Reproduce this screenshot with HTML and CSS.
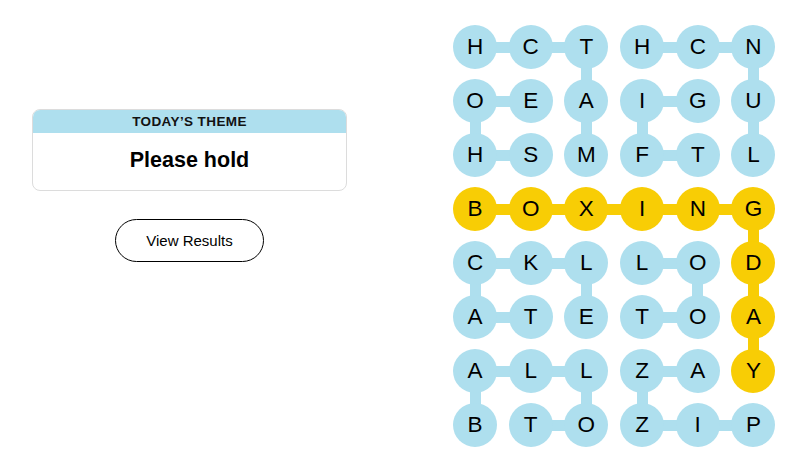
FILE: index.html
```html
<!DOCTYPE html>
<html>
<head>
<meta charset="utf-8">
<link rel="stylesheet" href="styles.css">
</head>
<body>
<main class="page">
  <section class="side">
    <div class="theme">
      <div class="theme-head">TODAY’S THEME</div>
      <div class="theme-body">Please hold</div>
    </div>
    <button class="results">View Results</button>
  </section>
  <section class="board">
    <div class="cell"><span class="dot">H</span><i class="r"></i></div>
    <div class="cell"><span class="dot">C</span><i class="r"></i></div>
    <div class="cell"><span class="dot">T</span><i class="d"></i></div>
    <div class="cell"><span class="dot">H</span><i class="r"></i></div>
    <div class="cell"><span class="dot">C</span><i class="r"></i></div>
    <div class="cell"><span class="dot">N</span><i class="d"></i></div>

    <div class="cell"><span class="dot">O</span><i class="r"></i><i class="d"></i></div>
    <div class="cell"><span class="dot">E</span></div>
    <div class="cell"><span class="dot">A</span><i class="d"></i></div>
    <div class="cell"><span class="dot">I</span><i class="r"></i><i class="d"></i></div>
    <div class="cell"><span class="dot">G</span></div>
    <div class="cell"><span class="dot">U</span><i class="d"></i></div>

    <div class="cell"><span class="dot">H</span><i class="r"></i></div>
    <div class="cell"><span class="dot">S</span></div>
    <div class="cell"><span class="dot">M</span></div>
    <div class="cell"><span class="dot">F</span><i class="r"></i></div>
    <div class="cell"><span class="dot">T</span></div>
    <div class="cell"><span class="dot">L</span></div>

    <div class="cell gold"><span class="dot">B</span><i class="r"></i></div>
    <div class="cell gold"><span class="dot">O</span><i class="r"></i></div>
    <div class="cell gold"><span class="dot">X</span><i class="r"></i></div>
    <div class="cell gold"><span class="dot">I</span><i class="r"></i></div>
    <div class="cell gold"><span class="dot">N</span><i class="r"></i></div>
    <div class="cell gold"><span class="dot">G</span><i class="d"></i></div>

    <div class="cell"><span class="dot">C</span><i class="r"></i><i class="d"></i></div>
    <div class="cell"><span class="dot">K</span><i class="r"></i></div>
    <div class="cell"><span class="dot">L</span><i class="d"></i></div>
    <div class="cell"><span class="dot">L</span><i class="r"></i></div>
    <div class="cell"><span class="dot">O</span><i class="d"></i></div>
    <div class="cell gold"><span class="dot">D</span><i class="d"></i></div>

    <div class="cell"><span class="dot">A</span><i class="r"></i></div>
    <div class="cell"><span class="dot">T</span></div>
    <div class="cell"><span class="dot">E</span></div>
    <div class="cell"><span class="dot">T</span><i class="r"></i></div>
    <div class="cell"><span class="dot">O</span></div>
    <div class="cell gold"><span class="dot">A</span><i class="d"></i></div>

    <div class="cell"><span class="dot">A</span><i class="r"></i><i class="d"></i></div>
    <div class="cell"><span class="dot">L</span><i class="r"></i></div>
    <div class="cell"><span class="dot">L</span><i class="d"></i></div>
    <div class="cell"><span class="dot">Z</span><i class="r"></i><i class="d"></i></div>
    <div class="cell"><span class="dot">A</span></div>
    <div class="cell gold"><span class="dot">Y</span></div>

    <div class="cell"><span class="dot">B</span></div>
    <div class="cell"><span class="dot">T</span><i class="r"></i></div>
    <div class="cell"><span class="dot">O</span></div>
    <div class="cell"><span class="dot">Z</span><i class="r"></i></div>
    <div class="cell"><span class="dot">I</span><i class="r"></i></div>
    <div class="cell"><span class="dot">P</span></div>
  </section>
</main>
</body>
</html>
```

FILE: styles.css
```css
html, body {
  margin: 0;
  padding: 0;
  background: #ffffff;
}

.page {
  display: flex;
  width: 802px;
  height: 465px;
  font-family: "Liberation Sans", Arial, sans-serif;
  color: #000;
}

.side {
  width: 315px;
  margin-left: 32px;
  padding-top: 109px;
  display: flex;
  flex-direction: column;
  align-items: center;
}

.theme {
  width: 100%;
  box-sizing: border-box;
  border: 1px solid #dcdcdc;
  border-radius: 8px;
  overflow: hidden;
}

.theme-head {
  background: #aedfee;
  height: 23px;
  line-height: 24px;
  text-align: center;
  font-size: 13.5px;
  font-weight: 700;
  letter-spacing: 0.4px;
  color: #121212;
}

.theme-body {
  height: 57px;
  line-height: 54px;
  text-align: center;
  font-size: 21.5px;
  font-weight: 700;
  color: #000;
}

.results {
  margin-top: 28px;
  width: 149px;
  height: 43px;
  border: 1px solid #000;
  border-radius: 22px;
  background: #fff;
  font-family: "Liberation Sans", Arial, sans-serif;
  font-size: 15px;
  color: #000;
  padding: 0;
}

.board {
  margin-left: 106px;
  margin-top: 25px;
  display: grid;
  grid-template-columns: repeat(6, 44px);
  grid-auto-rows: 44px;
  column-gap: 11.7px;
  row-gap: 10px;
  align-content: start;
}

.cell {
  position: relative;
  width: 44px;
  height: 44px;
  --c: #aedfee;
}

.cell.gold {
  --c: #f8cd05;
}

.dot {
  position: relative;
  z-index: 2;
  display: flex;
  align-items: center;
  justify-content: center;
  width: 44px;
  height: 44px;
  border-radius: 50%;
  background: var(--c);
  font-size: 22.5px;
  color: #000;
}

.r, .d {
  position: absolute;
  z-index: 1;
  background: var(--c);
}

.r {
  left: 36px;
  top: 16.5px;
  width: 28px;
  height: 11px;
}

.d {
  top: 36px;
  left: 16.5px;
  width: 11px;
  height: 26px;
}
```
